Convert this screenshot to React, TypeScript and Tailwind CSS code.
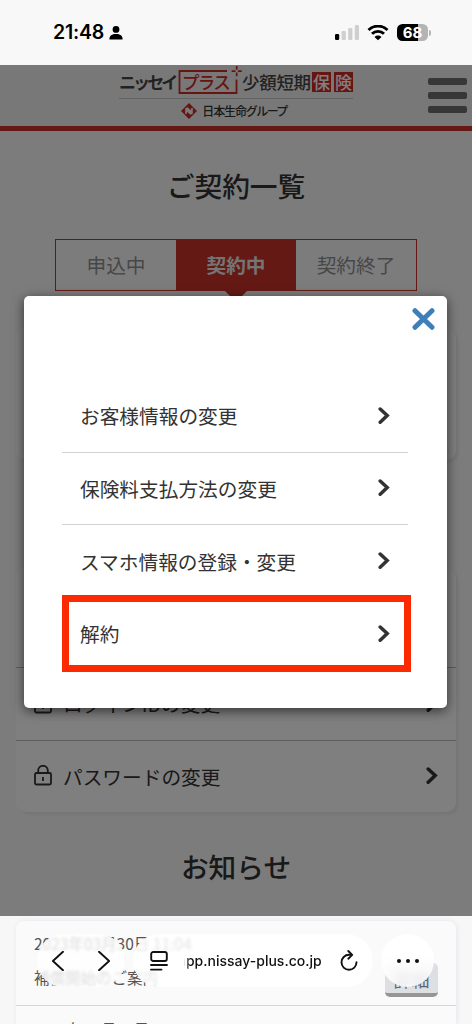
import type { ReactNode } from "react";

import { clsx } from "clsx";

const FONT = "font-['Noto_Sans_CJK_JP',sans-serif]";

const MENU_ITEMS = ["お客様情報の変更", "保険料支払方法の変更", "スマホ情報の登録・変更", "解約"];

const TABS = [
  { label: "申込中", active: false },
  { label: "契約中", active: true },
  { label: "契約終了", active: false }
];

function Chevron() {
  return (
    <svg className="h-[18px] w-3 shrink-0" viewBox="0 0 12 18" fill="none" stroke="#333" strokeWidth="3.5">
      <path d="M2.2 2 9.200 8.600 2.200 15.200" strokeLinecap="round" strokeLinejoin="miter" />
    </svg>
  );
}

function LockIcon() {
  return (
    <svg className="h-[22px] w-[18px] shrink-0" viewBox="0 0 18 22" fill="none" stroke="#333" strokeWidth="1.8">
      <rect x="1" y="8" width="16" height="11.500" rx="1.5" />
      <path d="M4.2 8V5.600a4.8 4.8 0 0 1 9.6 0V8M9 12v4" />
    </svg>
  );
}

function StatusBar() {
  return (
    <div className="flex h-[65px] shrink-0 items-center justify-between bg-[#f8f8f8] pr-[41px] pl-[53px]">
      <div className="flex items-center gap-[5px]">
        <span className="font-[Inter,sans-serif] text-[19.500px] leading-none font-semibold tracking-[-0.200px]">
          21:48
        </span>
        <svg className="h-[14px] w-[14px]" viewBox="0 0 14 14">
          <circle cx="7" cy="3.4" r="3.4" />
          <path d="M.4 13.400C.2 9.800 3 8 7 8s6.800 1.800 6.600 5.400z" />
        </svg>
      </div>
      <div className="flex items-center">
        <svg className="h-4 w-[25px]" viewBox="0 0 25 16">
          <rect x="0" y="9" width="4.200" height="6" rx="1.200" />
          <g fill="#cfcfcf">
            <rect x="6.600" y="6" width="4.200" height="9" rx="1.200" />
            <rect x="13.200" y="3" width="4.200" height="12" rx="1.200" />
            <rect x="19.800" y="0" width="4.200" height="15" rx="1.200" />
          </g>
        </svg>
        <svg className="ml-[7px] h-4 w-[22px]" viewBox="0 0 22 16" fill="none" stroke="#000" strokeWidth="2.900">
          <path d="M1.500 5a13.600 13.600 0 0 1 19 0M5 8.800a8.600 8.600 0 0 1 12 0" />
          <path d="M11 15.200 7.500 11.900a4.900 4.900 0 0 1 7 0z" fill="#000" stroke="none" />
        </svg>
        <div className="ml-2 flex h-[17px] w-[31px] items-center justify-center rounded-[5.500px] bg-linear-to-r from-black from-68% to-[#b4b4b4] to-68%">
          <span className="font-[Inter,sans-serif] text-[15px] leading-none font-bold text-white">68</span>
        </div>
        <div className="ml-px h-[6px] w-[2px] rounded-r-full bg-[#b4b4b4]" />
      </div>
    </div>
  );
}

function LogoBox(props: { children: ReactNode }) {
  return (
    <span className="flex h-5 w-[19px] items-center justify-center bg-[#cf2a27] text-[17px] leading-none font-medium text-white">
      {props.children}
    </span>
  );
}

function Logo() {
  return (
    <div className="flex w-[234px] flex-col items-center pt-[3px]">
      <div className="flex h-[27px] w-full items-center text-[#444]">
        <span className="w-[59px] text-[17px] leading-none font-bold tracking-[-2.900px] whitespace-nowrap">
          ニッセイ
        </span>
        <span className="relative flex h-[25px] w-[59px] items-center justify-center">
          <svg className="absolute inset-0 h-[25px] w-[64px] overflow-visible" viewBox="0 0 64 25" fill="none" stroke="#cf2a27">
            <path d="M49 2H1.500v22h57V10.500" strokeWidth="1.800" />
            <path d="M58.700-3V.8M58.700 3.400v3.800M53.700 2.100h3.800M60 2.100h3.800" strokeWidth="1.700" />
          </svg>
          <span className="pr-1 text-[17.500px] leading-none font-medium tracking-[-1.700px] text-[#cf2a27]">プラス</span>
        </span>
        <span className="ml-[5px] w-[69px] text-[17.500px] leading-none font-medium tracking-[-0.300px] whitespace-nowrap">
          少額短期
        </span>
        <span className="ml-px flex gap-[3px]">
          <LogoBox>保</LogoBox>
          <LogoBox>険</LogoBox>
        </span>
      </div>
      <div className="mt-[3px] h-px w-full bg-[#c4c4c4]" />
      <div className="mt-1 mr-2 flex items-center gap-[5px] self-center pl-1">
        <svg className="h-4 w-4" viewBox="0 0 16 16">
          <path d="M8 0l8 8-8 8-8-8z" fill="#cf2a27" />
          <path d="M4.200 5.200 6.700 4.200 10 7.200V5.500l1.800-.7v6l-2.400 1L6 8.800v1.700l-1.800.7z" fill="#f4f4f4" />
        </svg>
        <span className="text-[12px] leading-4 font-medium tracking-[-1.600px] whitespace-nowrap text-[#333]">
          <span className="tracking-[-1.100px]">日本生命</span>グループ
        </span>
      </div>
    </div>
  );
}

function Header() {
  return (
    <header className="flex h-[66px] shrink-0 justify-between border-b-[5px] border-[#c93228] bg-[#f1f1f1] pr-[5px] pl-[119px]">
      <Logo />
      <div className="flex flex-col gap-[7px] pt-[13px]">
        <span className="h-[7px] w-[39px] rounded-[2px] bg-[#6f6f6f]" />
        <span className="h-[7px] w-[39px] rounded-[2px] bg-[#6f6f6f]" />
        <span className="h-[7px] w-[39px] rounded-[2px] bg-[#6f6f6f]" />
      </div>
    </header>
  );
}

function Tabs() {
  return (
    <div className="mx-auto mt-[36px] flex h-[52px] w-[362px] shrink-0 border border-[#c93228]">
      {TABS.map((tab) => (
        <div
          key={tab.label}
          className={clsx(
            "relative flex flex-1 items-center justify-center text-[19.700px] leading-none",
            tab.active ? "-my-px bg-[#c93228] font-bold text-[#e8e8e8]" : "text-[#8f8f8f]"
          )}
        >
          {tab.label}
          {tab.active && (
            <svg className="absolute top-[51px] h-3 w-6" viewBox="0 0 24 12">
              <path d="M0 0h24L12 12z" fill="#c93228" />
            </svg>
          )}
        </div>
      ))}
    </div>
  );
}

function SettingRow(props: { label: string }) {
  return (
    <div className="flex h-[72.500px] items-center border-t border-[#bdbdbd] pr-[18px] pl-[18px]">
      <LockIcon />
      <span className="ml-[11px] flex-1 pt-px text-[19.700px] leading-none text-[#333]">{props.label}</span>
      <Chevron />
    </div>
  );
}

function Page() {
  return (
    <div className="flex h-full flex-col bg-[#f9f9f9]">
      <Header />
      <h1 className="mt-[36px] text-center text-[27.700px] leading-[36px] font-medium text-[#333]">ご契約一覧</h1>
      <Tabs />
      <div className="mx-4 mt-[37px] h-[132px] shrink-0 rounded-[10px] bg-white shadow-[3px_3px_2px_#ebeeee]" />
      <div className="mx-4 mt-[108px] flex h-[244px] shrink-0 flex-col justify-end rounded-[10px] bg-white shadow-[3px_3px_2px_#ebeeee]">
        <SettingRow label="ログインIDの変更" />
        <SettingRow label="パスワードの変更" />
      </div>
      <h2 className="mt-[35px] text-center text-[27.700px] leading-[38px] font-medium text-[#333]">お知らせ</h2>
    </div>
  );
}

function Modal() {
  return (
    <div className="absolute top-[231px] left-6 flex h-[412px] w-[423px] flex-col rounded-[5px] bg-white shadow-[0_3px_12px_rgba(0,0,0,0.6)]">
      <div className="flex justify-end pt-3 pr-3">
        <svg className="h-[22px] w-[23px]" viewBox="0 0 23 22" stroke="#3f7fb9" strokeWidth="5" strokeLinecap="round">
          <path d="M3 2.700l17 16.600M20 2.700l-17 16.600" />
        </svg>
      </div>
      <ul className="mt-[50px] ml-[38px] w-[346px]">
        {MENU_ITEMS.map((item, i) => (
          <li
            key={item}
            className={clsx(
              "flex h-[72.500px] items-center justify-between pr-[18px] pl-[18px] text-[19.700px] leading-none text-[#333]",
              i < 2 && "border-b border-[#d2d2d2]"
            )}
          >
            <span className="pt-px">{item}</span>
            <Chevron />
          </li>
        ))}
      </ul>
      <div className="absolute top-[299px] left-[38px] h-[77px] w-[349px] border-[7px] border-[#fc2a02]" />
    </div>
  );
}

function NewsBackground() {
  return (
    <div className="mx-4 mt-[5px] h-[103px] rounded-t-[8px] bg-[#fafafa] shadow-[1px_0_5px_#e4e6ec]">
      <div className="relative h-[85px] border-b border-[#d6d6d6] pt-[13px] pl-[18px] text-[#555]">
        <p className="text-[15.500px] leading-[18px]">2023年03月30日 11:04</p>
        <p className="mt-4 text-[15.500px] leading-[18px]">補償開始のご案内</p>
        <div className="absolute top-[42px] right-[18px] flex h-[34px] w-[53px] items-end justify-center rounded-[5px] border-b-4 border-[#969696] bg-[#dedfe3] pb-1 text-[18px] leading-[20px] text-[#606575]">
          詳細
        </div>
      </div>
      <p className="mt-[14px] pl-[18px] text-[15.500px] leading-[18px] text-[#555]">2023年03月29日</p>
    </div>
  );
}

function BrowserBar() {
  return (
    <div className="absolute inset-x-0 top-[18px] flex h-[53px] items-center gap-2 pr-[37px] pl-[37px] text-[#111]">
      <div className="flex h-full w-[88px] items-center justify-between rounded-full bg-white/80 pr-[15px] pl-[15px] backdrop-blur-[1.500px]">
        <svg className="h-5 w-3" viewBox="0 0 12 20" fill="none" stroke="currentColor" strokeWidth="1.900">
          <path d="M11 .8.900 10 11 19.200" strokeLinecap="round" />
        </svg>
        <svg className="h-5 w-3" viewBox="0 0 12 20" fill="none" stroke="currentColor" strokeWidth="1.900">
          <path d="M1 .8 11.100 10 1 19.200" strokeLinecap="round" />
        </svg>
      </div>
      <div className="flex h-full w-[240px] items-center rounded-full bg-white/85 pr-[15px] pl-[17px] backdrop-blur-[1.500px]">
        <svg className="h-5 w-[18px] shrink-0" viewBox="0 0 18 20" fill="none" stroke="currentColor" strokeWidth="1.900">
          <rect x="1.200" y="1" width="15.600" height="9" rx="2" />
          <path d="M1 14h16M1 18.600h10.500" strokeLinecap="round" />
        </svg>
        <span className="mr-auto ml-[10px] bg-linear-to-r from-transparent from-4% to-[#111] to-8% bg-clip-text font-[Inter,sans-serif] text-[14px] leading-5 font-medium tracking-[0px] whitespace-nowrap text-transparent">
          app.nissay-plus.co.jp
        </span>
        <svg className="h-[21px] w-[18px] shrink-0" viewBox="0 0 18 21" fill="none" stroke="currentColor" strokeWidth="1.900">
          <path d="M11 4.800H9a7.500 7.500 0 1 0 7.500 7.500" strokeLinecap="round" />
          <path d="m8.300 1 3.900 3.900-3.900 3.800" strokeLinecap="round" strokeLinejoin="round" />
        </svg>
      </div>
      <div className="flex h-[53px] w-[53px] items-center justify-center gap-[5px] rounded-full bg-white/85 backdrop-blur-[3px]">
        <span className="size-1 rounded-full bg-[#111]" />
        <span className="size-1 rounded-full bg-[#111]" />
        <span className="size-1 rounded-full bg-[#111]" />
      </div>
    </div>
  );
}

export default function App() {
  return (
    <div className={clsx("flex h-[1024px] w-[472px] flex-col overflow-hidden", FONT)}>
      <StatusBar />
      <main className="relative h-[851px] shrink-0 overflow-hidden">
        <Page />
        <div className="absolute inset-0 bg-black/50" />
        <Modal />
      </main>
      <div className="relative h-[108px] shrink-0 overflow-hidden bg-[#f7f7f8]">
        <NewsBackground />
        <BrowserBar />
      </div>
    </div>
  );
}
